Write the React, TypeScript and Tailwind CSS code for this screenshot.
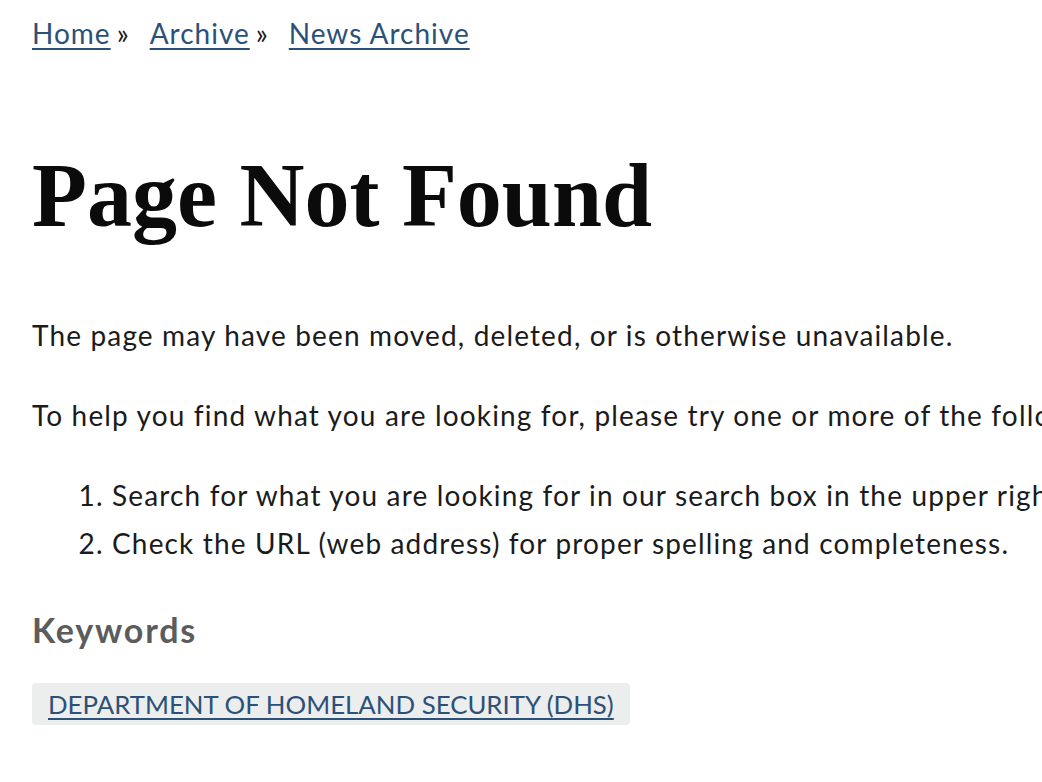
export default function App() {
  const sans = "font-['Lato','Noto_Sans',sans-serif]";
  const link = "text-[#2b5179] underline underline-offset-4 decoration-2";
  return (
    <div className="w-[1042px] h-[782px] overflow-hidden bg-white">
      <div className={`w-[1500px] pl-[32px] text-[#1b1b1b] ${sans}`}>
        {/* Breadcrumb */}
        <nav className="pt-[14px] flex items-center text-[28px] leading-[38px] tracking-[1px]">
          <a href="#" className={link}>
            Home
          </a>
          <span className="ml-[6px] mr-[20px]">»</span>
          <a href="#" className={link}>
            Archive
          </a>
          <span className="ml-[6px] mr-[20px]">»</span>
          <a href="#" className={link}>
            News Archive
          </a>
        </nav>

        <h1 className="mt-[94px] font-['Liberation_Serif',serif] font-bold text-[90px] leading-[100px] text-[#0b0b0b]">
          Page Not Found
        </h1>

        <div className="text-[28px] leading-[48px] tracking-[1.15px]">
          <p className="mt-[65px]">
            The page may have been moved, deleted, or is otherwise unavailable.
          </p>
          <p className="mt-[32px]">
            To help you find what you are looking for, please try one or more of the following:
          </p>

          <ol className="mt-[32px] list-decimal pl-[80px]">
            <li>Search for what you are looking for in our search box in the upper right of the page.</li>
            <li>Check the URL (web address) for proper spelling and completeness.</li>
          </ol>
        </div>

        <h2 className="mt-[43px] text-[34px] leading-[40px] font-bold text-[#5c5c5c] tracking-[1.8px]">
          Keywords
        </h2>

        <div className="mt-[33px] flex">
          <a
            href="#"
            className="bg-[#eceded] rounded-[4px] pl-[16px] pr-[16px] h-[42px] flex items-center text-[25.8px] text-[#2b5179] underline underline-offset-4"
          >
            DEPARTMENT OF HOMELAND SECURITY (DHS)
          </a>
        </div>
      </div>
    </div>
  );
}
